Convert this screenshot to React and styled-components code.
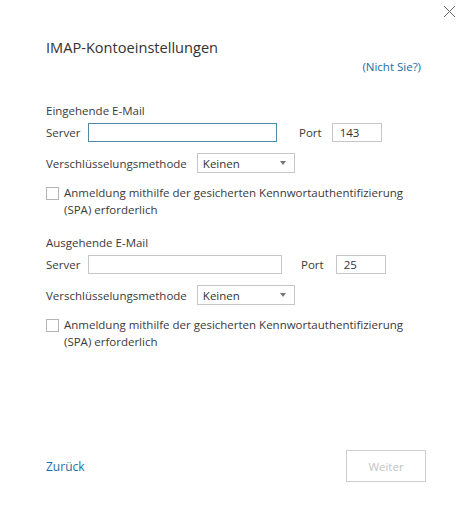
import React from "react";
import styled, { createGlobalStyle } from "styled-components";

const Global = createGlobalStyle`
  html, body { margin: 0; padding: 0; background: #ffffff; }
  body { font-family: "Open Sans", "Noto Sans", sans-serif; color: #3a3a3a; }
  * { box-sizing: border-box; }
`;

const Dialog = styled.div`
  width: 467px;
  height: 523px;
  display: flex;
  flex-direction: column;
  background: #fff;
`;

const TopBar = styled.div`
  display: flex;
  justify-content: flex-end;
  padding: 5px 11px 0 0;
  height: 37px;
`;

const CloseButton = styled.button`
  border: none;
  background: transparent;
  padding: 0;
  width: 13px;
  height: 13px;
  display: flex;
  cursor: pointer;
`;

const Body = styled.div`
  display: flex;
  flex-direction: column;
  padding: 0 46px 0 46px;
  flex: 1;
`;

const Title = styled.h1`
  margin: 0;
  font-size: 14.6px;
  font-weight: 400;
  color: #333;
  line-height: 20px;
`;

const LinkRow = styled.div`
  display: flex;
  justify-content: flex-end;
  margin-top: 2px;
`;

const Link = styled.a`
  font-size: 11.5px;
  color: #1c6ea4;
  text-decoration: none;
  line-height: 16px;
  cursor: pointer;
`;

const Section = styled.section`
  display: flex;
  flex-direction: column;
  margin-top: ${(p) => p.$top}px;
`;

const SectionHeading = styled.div`
  font-size: 11.5px;
  line-height: 16px;
  color: #3a3a3a;
`;

const Row = styled.div`
  display: flex;
  align-items: center;
  margin-top: ${(p) => p.$top || 0}px;
`;

const Label = styled.label`
  font-size: 11.5px;
  color: #3a3a3a;
  width: ${(p) => (p.$width ? `${p.$width}px` : "auto")};
  margin-left: ${(p) => p.$left || 0}px;
  margin-right: ${(p) => p.$gap || 0}px;
  flex-shrink: 0;
`;

const TextInput = styled.input`
  height: 19px;
  width: ${(p) => p.$width}px;
  border: 1px solid ${(p) => (p.$focused ? "#4d8aa6" : "#c6c6c6")};
  font-family: inherit;
  font-size: 11.5px;
  color: #333;
  padding: 0 7px;
  outline: none;
  background: #fff;
`;

const SelectBox = styled.div`
  width: 98px;
  height: 20px;
  border: 1px solid #c6c6c6;
  display: flex;
  align-items: center;
  justify-content: space-between;
  padding: 0 6px 0 5px;
  margin-left: 10px;
  font-size: 11.5px;
  color: #333;
`;

const Caret = styled.span`
  width: 0;
  height: 0;
  border-left: 3.5px solid transparent;
  border-right: 3.5px solid transparent;
  border-top: 4px solid #777;
  margin-right: 2px;
`;

const CheckRow = styled.div`
  display: flex;
  align-items: flex-start;
  margin-top: 14px;
`;

const CheckBox = styled.span`
  width: 13px;
  height: 13px;
  border: 1px solid #b4b4b4;
  flex-shrink: 0;
  margin-right: 5px;
  background: #fff;
`;

const CheckText = styled.span`
  font-size: 11.5px;
  line-height: 17px;
  color: #3a3a3a;
  margin-top: -3px;
`;

const Footer = styled.div`
  display: flex;
  justify-content: space-between;
  align-items: center;
  padding: 0 41px 0 46px;
  margin-bottom: 41px;
`;

const BackLink = styled.a`
  font-size: 12px;
  color: #1c6ea4;
  cursor: pointer;
`;

const NextButton = styled.button`
  width: 80px;
  height: 32px;
  border: 1px solid #cfcfcf;
  background: #fff;
  color: #c4c4c4;
  font-family: inherit;
  font-size: 11.5px;
`;

function MailSection({ title, top, serverWidth, portGap, portInputGap, port, focused }) {
  return (
    <Section $top={top}>
      <SectionHeading>{title}</SectionHeading>
      <Row $top={4}>
        <Label $width={42}>Server</Label>
        <TextInput $width={serverWidth} $focused={focused} defaultValue="" />
        <Label $left={portGap} $gap={portInputGap}>Port</Label>
        <TextInput $width={50} defaultValue={port} />
      </Row>
      <Row $top={11}>
        <Label>Verschlüsselungsmethode</Label>
        <SelectBox>
          <span>Keinen</span>
          <Caret />
        </SelectBox>
      </Row>
      <CheckRow>
        <CheckBox />
        <CheckText>
          Anmeldung mithilfe der gesicherten Kennwortauthentifizierung
          <br />
          (SPA) erforderlich
        </CheckText>
      </CheckRow>
    </Section>
  );
}

export default function App() {
  return (
    <>
      <Global />
      <Dialog>
        <TopBar>
          <CloseButton aria-label="Schließen">
            <svg width="13" height="13" viewBox="0 0 13 13">
              <path d="M1 1 L12 12 M12 1 L1 12" stroke="#666" strokeWidth="1" />
            </svg>
          </CloseButton>
        </TopBar>
        <Body>
          <Title>IMAP-Kontoeinstellungen</Title>
          <LinkRow>
            <Link>(Nicht Sie?)</Link>
          </LinkRow>
          <MailSection
            title="Eingehende E-Mail"
            top={28}
            serverWidth={189}
            portGap={22}
            portInputGap={10}
            port="143"
            focused
          />
          <MailSection
            title="Ausgehende E-Mail"
            top={17}
            serverWidth={194}
            portGap={19}
            portInputGap={12}
            port="25"
          />
        </Body>
        <Footer>
          <BackLink>Zurück</BackLink>
          <NextButton disabled>Weiter</NextButton>
        </Footer>
      </Dialog>
    </>
  );
}
